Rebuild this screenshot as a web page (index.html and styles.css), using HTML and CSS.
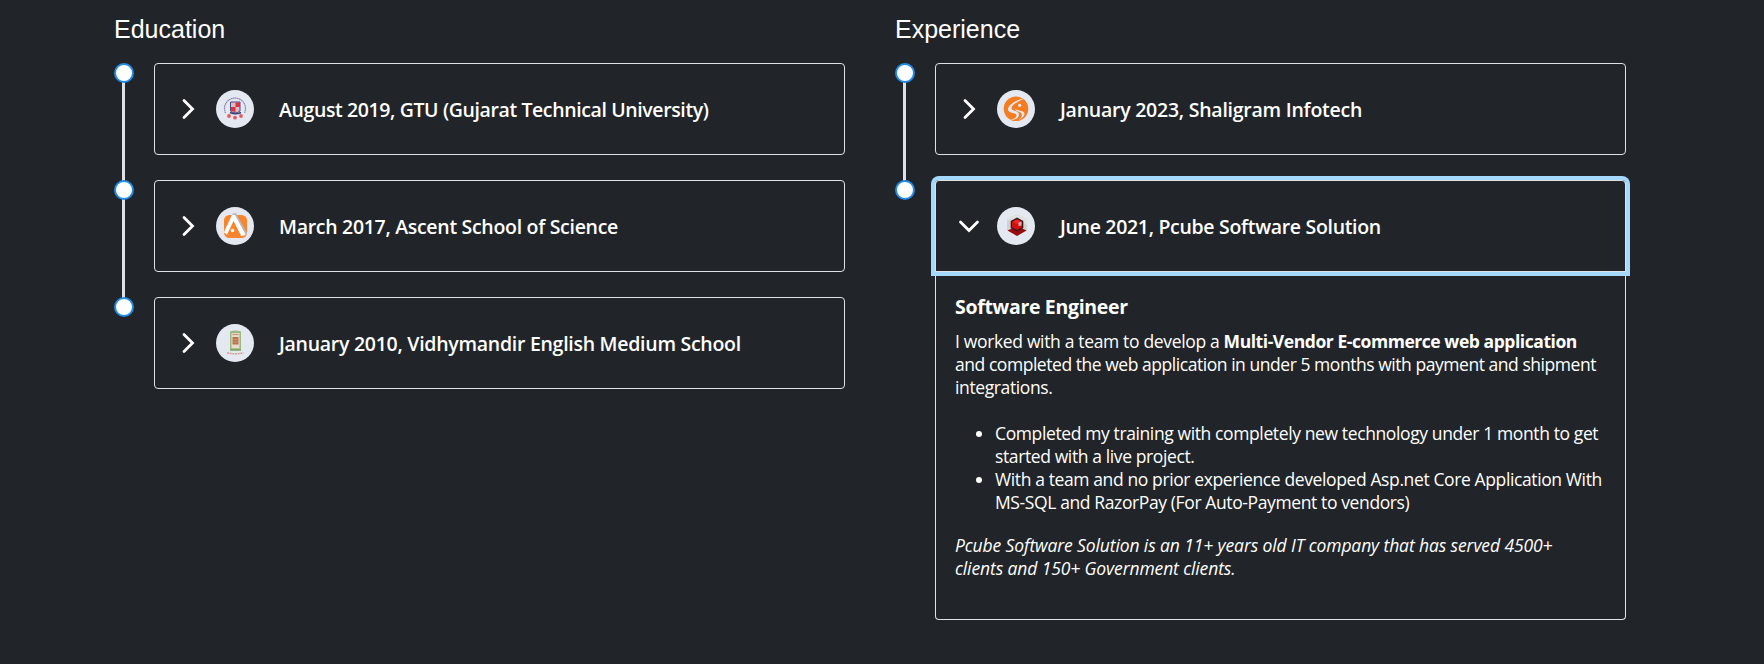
FILE: index.html
```html
<!DOCTYPE html>
<html lang="en">
<head>
<meta charset="utf-8">
<title>Education and Experience</title>
<link rel="stylesheet" href="styles.css">
</head>
<body>
<main class="columns">
  <section class="column">
    <h2 class="column-title">Education</h2>
    <ol class="timeline">
      <li class="entry">
        <div class="rail"><span class="dot"></span></div>
        <div class="card">
          <div class="card-head">
            <svg class="chevron" viewBox="0 0 24 24"><path d="M8 3.500 16.500 12 8 20.500"/></svg>
            <svg class="avatar" viewBox="0 0 38 38">
              <circle cx="19" cy="19" r="19" fill="#e4e8f1"/>
              <path d="M9.500 23A10.500 10.500 0 1 1 28.500 23" fill="none" stroke="#8583b5" stroke-width="1.200" stroke-dasharray="1.600 .5"/>
              <path d="M14.500 12h9.500v9q-5 4-9.500 0z" fill="#d8bccb" stroke="#4d4a83" stroke-width="1"/>
              <path d="M19.500 12.500H24V17h-4.500zM15 17h4.500v5q-3-.2-4.500-1.500z" fill="#df3038"/>
              <path d="M14 22.500q5.500 2.500 11 0" fill="none" stroke="#3f3f76" stroke-width="1.600"/>
              <circle cx="13" cy="26" r="1.900" fill="#e85b5c"/><circle cx="19" cy="27.700" r="1.900" fill="#e85b5c"/><circle cx="25" cy="26" r="1.900" fill="#e85b5c"/>
            </svg>
            <span class="card-title t-gtu">August 2019, GTU (Gujarat Technical University)</span>
          </div>
        </div>
      </li>
      <li class="entry">
        <div class="rail"><span class="dot"></span></div>
        <div class="card">
          <div class="card-head">
            <svg class="chevron" viewBox="0 0 24 24"><path d="M8 3.500 16.500 12 8 20.500"/></svg>
            <svg class="avatar" viewBox="0 0 38 38">
              <circle cx="19" cy="19" r="19" fill="#e4e8f1"/>
              <rect x="8" y="8" width="23" height="23" rx="5.500" fill="#f98429"/>
              <path d="M16.500 6.500 20 6l11 20-2 3.500z" fill="#b9b9bd"/>
              <path d="m8.500 23 8-16 3 2.500-9 18.500z" fill="#c3c3c7"/>
              <path d="M16 8h3l10.500 19.500-4 2L17.500 14 11 27.500l-3-2z" fill="#fff"/>
              <circle cx="16.500" cy="23.500" r="1.800" fill="#fff"/>
            </svg>
            <span class="card-title t-ascent">March 2017, Ascent School of Science</span>
          </div>
        </div>
      </li>
      <li class="entry">
        <div class="rail"><span class="dot"></span></div>
        <div class="card">
          <div class="card-head">
            <svg class="chevron" viewBox="0 0 24 24"><path d="M8 3.500 16.500 12 8 20.500"/></svg>
            <svg class="avatar" viewBox="0 0 38 38">
              <circle cx="19" cy="19" r="19" fill="#e4e8f1"/>
              <path d="M14 7.500q5.500-2 11 0V27H14z" fill="#9aba82"/>
              <path d="M15.500 9h8v15.500h-8z" fill="#e6dccb"/>
              <path d="M16.500 10.500h6" stroke="#c9987c" stroke-width="1.200"/>
              <path d="M16.500 13h6v7.500h-6z" fill="#b9744f"/>
              <path d="M17.500 15.500h4M17.500 18h4" stroke="#d9a78c" stroke-width=".7"/>
              <path d="M14.500 25.500h10" stroke="#7ea569" stroke-width="1.400"/>
              <path d="M11 28.800q8 2 16.500 0" fill="none" stroke="#cf9e93" stroke-width="1.500" stroke-dasharray="2 .7"/>
            </svg>
            <span class="card-title t-vidhya">January 2010, Vidhymandir English Medium School</span>
          </div>
        </div>
      </li>
    </ol>
  </section>

  <section class="column">
    <h2 class="column-title">Experience</h2>
    <ol class="timeline">
      <li class="entry">
        <div class="rail"><span class="dot"></span></div>
        <div class="card">
          <div class="card-head">
            <svg class="chevron" viewBox="0 0 24 24"><path d="M8 3.500 16.500 12 8 20.500"/></svg>
            <svg class="avatar" viewBox="0 0 38 38">
              <circle cx="19" cy="19" r="19" fill="#e4e8f1"/>
              <circle cx="19" cy="18.700" r="12.300" fill="#f57c1f"/>
              <path d="M28 8C21 9.500 11 14 11 19.500c0 4 8.500 3 8.500 6 0 2.500-3 3.500-6.500 4.500 5 .3 9-2 9-5.500 0-4.500-7.500-3-7.500-6.500 0-3.500 7-6.500 13.500-10z" fill="#e4e8f1"/>
              <path d="M18 18.500c1 2.500 9 1.500 9.500 5 .3 2.500-2.500 5-6 6.700 3-2.700 4-4.700 3-6.700-1-1.800-6.500-1.500-6.500-5z" fill="#e4e8f1"/>
              <circle cx="22.700" cy="15.300" r="1.600" fill="#e4e8f1"/>
            </svg>
            <span class="card-title t-shaligram">January 2023, Shaligram Infotech</span>
          </div>
        </div>
      </li>
      <li class="entry">
        <div class="rail"><span class="dot"></span></div>
        <div class="card card-open">
          <div class="card-head card-head-focus">
            <svg class="chevron chevron-down" viewBox="0 0 24 24"><path d="M8 3.500 16.500 12 8 20.500"/></svg>
            <svg class="avatar" viewBox="0 0 38 38">
              <circle cx="19" cy="19" r="19" fill="#e4e8f1"/>
              <path d="m20 7 10 5v11l-10 5-10-5V12z" fill="#d2d2d3"/>
              <path d="m20 7 10 5v6l-10-6-10 1v-1z" fill="#e2e2e2"/>
              <path d="m10.500 23.500 9.500-4.500 9.500 4.500L20 29z" fill="#990c0e"/>
              <path d="m20 10.500 6.300 3.500v7L20 24.500 13.700 21v-7z" fill="#34191b"/>
              <path d="m20 12 5 2.800v5.400L20 23l-5-2.800v-5.400z" fill="#d40d0d"/>
              <path d="m20 12.500 4.500 2.500-4.500 2-4.500-2z" fill="#ed2424"/>
              <path d="m21.500 15.500 3-1v4l-3 .5z" fill="#f4a9a6"/>
            </svg>
            <span class="card-title t-pcube">June 2021, Pcube Software Solution</span>
          </div>
          <div class="card-body">
            <h3 class="role">Software Engineer</h3>
            <p class="copy"><span class="loose">I worked with a team to develop a </span><b>Multi-Vendor E-commerce web application</b><br><span class="snug">and completed the web application in under 5 months with payment and shipment</span><br>integrations.</p>
            <ul class="bullets">
              <li>Completed my training with completely new technology under 1 month to get<br>started with a live project.</li>
              <li>With a team and no prior experience developed Asp.net Core Application With<br>MS-SQL and RazorPay (For Auto-Payment to vendors)</li>
            </ul>
            <p class="about">Pcube Software Solution is an 11+ years old IT company that has served 4500+<br>clients and 150+ Government clients.</p>
          </div>
        </div>
      </li>
    </ol>
  </section>
</main>
</body>
</html>
```
FILE: styles.css
```css
* { box-sizing: border-box; }

body {
  margin: 0;
  background: #212529;
  color: #fff;
  font-family: "Open Sans", "Noto Sans", sans-serif;
}

.columns {
  display: grid;
  grid-template-columns: 731px 731px;
  column-gap: 50px;
  padding: 14px 0 0 114px;
}

.column-title {
  margin: 0 0 19px;
  font: 400 25px/30px "Liberation Sans", Arial, sans-serif;
}

.timeline {
  display: flex;
  flex-direction: column;
  gap: 25px;
  margin: 0;
  padding: 0;
  list-style: none;
}

.entry {
  display: grid;
  grid-template-columns: 20px 691px;
  column-gap: 20px;
}

.rail { position: relative; }

/* connector reaching down to the next dot */
.entry:not(:last-child) .rail::before {
  content: "";
  position: absolute;
  top: 10px;
  bottom: -35px;
  left: 8px;
  width: 3px;
  background: #dee2e6;
}

.dot {
  position: relative;
  z-index: 1;
  display: block;
  width: 20px;
  height: 20px;
  border: 2px solid #228be6;
  border-radius: 50%;
  background: #fff;
}

.card {
  border: 1px solid #dee2e6;
  border-radius: 4px;
}

.card-head {
  display: flex;
  align-items: center;
  height: 90px;
  padding: 0 21px;
}

.card-open {
  height: 440px;
  border-top: 0;
}

.card-head-focus {
  height: 92px;
  margin: 0 -1px;
  border: 1px solid #dee2e6;
  border-radius: 4px 4px 0 0;
  box-shadow: 0 0 0 4px #a5d8ff;
}

.chevron {
  width: 24px;
  height: 24px;
  margin-right: 16px;
  fill: none;
  stroke: #fff;
  stroke-width: 2.800;
  stroke-linecap: round;
  stroke-linejoin: miter;
}

.chevron-down { transform: rotate(90deg); }

.avatar {
  width: 38px;
  height: 38px;
  margin-right: 25px;
}

.card-title {
  padding-top: 2px;
  font-size: 19.500px;
  font-weight: 600;
  line-height: 28px;
  white-space: nowrap;
}

.t-gtu { letter-spacing: -0.385px; }
.t-ascent { letter-spacing: -0.300px; }
.t-vidhya { letter-spacing: -0.275px; }
.t-shaligram { letter-spacing: -0.245px; }
.t-pcube { letter-spacing: -0.315px; }

.card-body {
  padding: 21px 19px 0;
  font-size: 17.500px;
  line-height: 23px;
  letter-spacing: -0.385px;
  white-space: nowrap;
}

.role {
  margin: 0 0 9px;
  font-size: 19.500px;
  font-weight: 700;
  line-height: 28px;
  letter-spacing: -0.320px;
}

.copy { margin: 0 0 23px; }
.copy b { letter-spacing: -0.440px; }
.loose { letter-spacing: -0.340px; }
.snug { letter-spacing: -0.455px; }

.bullets {
  margin: 0 0 20px;
  padding-left: 40px;
  list-style: disc;
}

.about {
  margin: 0;
  font-style: italic;
  letter-spacing: -0.115px;
}
```
